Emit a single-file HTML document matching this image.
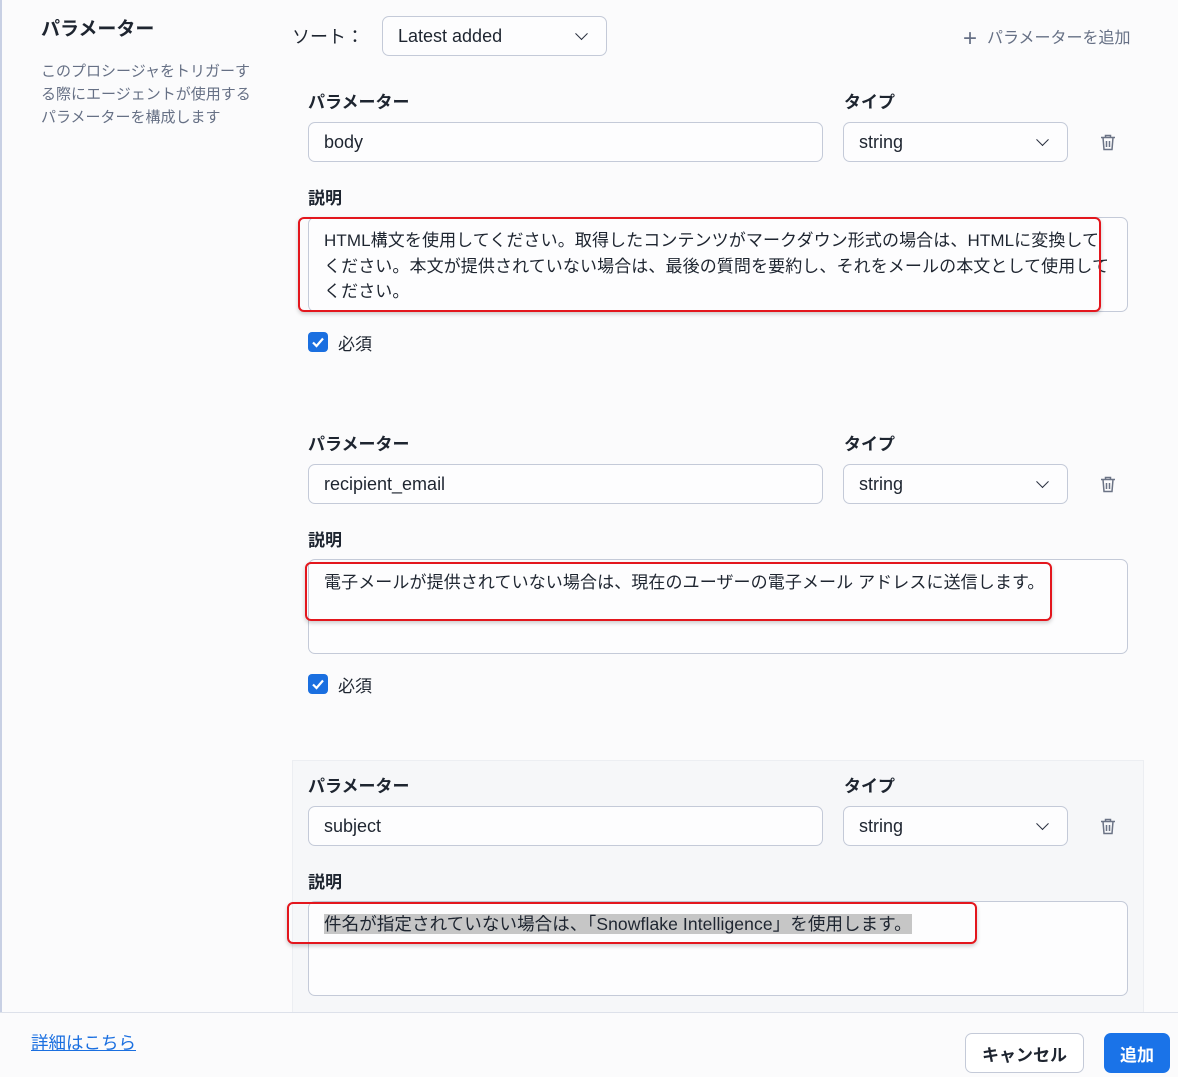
<!DOCTYPE html>
<html><head><meta charset="utf-8"><style>
*{box-sizing:border-box;margin:0;padding:0}
body{width:1178px;height:1077px;background:#fbfbfc;font-family:"Liberation Sans","Noto Sans CJK JP",sans-serif;color:#1e2530;position:relative;overflow:hidden}
.a{position:absolute}
.lbl{font-size:17px;font-weight:bold;color:#1e2530}
.inp{position:absolute;border:1px solid #c4cad8;border-radius:7px;background:#fdfdfe;font-size:18px;padding-left:15px;display:flex;align-items:center}
.ta{position:absolute;border:1px solid #c4cad8;border-radius:7px;background:#fdfdfe;font-size:17px;line-height:25.5px;padding:10px 15px;letter-spacing:0.1px}
.red{position:absolute;border:2px solid #e3161d;border-radius:6px;box-shadow:0 2px 4px rgba(0,0,0,.2)}
.chev{position:absolute;right:20px;top:50%;width:9px;height:9px;border-right:1.6px solid #2a3140;border-bottom:1.6px solid #2a3140;transform:translateY(-75%) rotate(45deg)}
.cb{position:absolute;width:20px;height:20px;background:#1a6fe0;border-radius:4px}
.req{position:absolute;font-size:17px}
</style></head><body>
<div class="a" style="left:0;top:0;width:2px;height:1077px;background:#c8d0e4"></div>
<div class="a" style="left:41px;top:14px;font-size:19px;font-weight:bold">パラメーター</div>
<div class="a" style="left:41px;top:60px;font-size:15px;line-height:23px;color:#667085;width:218px">このプロシージャをトリガーする際にエージェントが使用するパラメーターを構成します</div>
<div class="a" style="left:292px;top:23px;font-size:18px">ソート：</div>
<div class="inp" style="left:382px;top:16px;width:225px;height:40px">Latest added<span class="chev"></span></div>
<div class="a" style="left:963px;top:24px;font-size:16px;color:#667085"><span style="font-size:24px;font-weight:300;vertical-align:-3px;margin-right:10px">+</span>パラメーターを追加</div>

<div class="a" style="left:292px;top:760px;width:852px;height:260px;background:#f6f7f9;border:1px solid #eceef2"></div>

<!-- section 1 -->
<div class="a lbl" style="left:308px;top:88px">パラメーター</div>
<div class="a lbl" style="left:844px;top:88px">タイプ</div>
<div class="inp" style="left:308px;top:122px;width:515px;height:40px">body</div>
<div class="inp" style="left:843px;top:122px;width:225px;height:40px">string<span class="chev"></span></div>
<svg class="a" style="left:1100px;top:134px" width="16" height="17" viewBox="0 0 16 17" fill="none" stroke="#6b7385" stroke-width="1.5"><path d="M1 3.5h14M5.5 3.5V1.5h5v2M3 3.5l1 12h8l1-12M6.5 7v6M9.5 7v6"/></svg>
<div class="a lbl" style="left:308px;top:184px">説明</div>
<div class="ta" style="left:308px;top:217px;width:820px;height:95px">HTML構文を使用してください。取得したコンテンツがマークダウン形式の場合は、HTMLに変換してください。本文が提供されていない場合は、最後の質問を要約し、それをメールの本文として使用してください。</div>
<div class="red" style="left:298px;top:217px;width:803px;height:95px"></div>
<div class="cb" style="left:308px;top:332px"><svg width="20" height="20"><path d="M5 10.5l3.5 3.5 6.5-7.5" stroke="#fff" stroke-width="2.2" fill="none"/></svg></div>
<div class="req" style="left:338px;top:330px">必須</div>

<!-- section 2 -->
<div class="a lbl" style="left:308px;top:430px">パラメーター</div>
<div class="a lbl" style="left:844px;top:430px">タイプ</div>
<div class="inp" style="left:308px;top:464px;width:515px;height:40px">recipient_email</div>
<div class="inp" style="left:843px;top:464px;width:225px;height:40px">string<span class="chev"></span></div>
<svg class="a" style="left:1100px;top:476px" width="16" height="17" viewBox="0 0 16 17" fill="none" stroke="#6b7385" stroke-width="1.5"><path d="M1 3.5h14M5.5 3.5V1.5h5v2M3 3.5l1 12h8l1-12M6.5 7v6M9.5 7v6"/></svg>
<div class="a lbl" style="left:308px;top:526px">説明</div>
<div class="ta" style="left:308px;top:559px;width:820px;height:95px">電子メールが提供されていない場合は、現在のユーザーの電子メール アドレスに送信します。</div>
<div class="red" style="left:305px;top:562px;width:747px;height:59px"></div>
<div class="cb" style="left:308px;top:674px"><svg width="20" height="20"><path d="M5 10.5l3.5 3.5 6.5-7.5" stroke="#fff" stroke-width="2.2" fill="none"/></svg></div>
<div class="req" style="left:338px;top:672px">必須</div>

<!-- section 3 -->
<div class="a lbl" style="left:308px;top:772px">パラメーター</div>
<div class="a lbl" style="left:844px;top:772px">タイプ</div>
<div class="inp" style="left:308px;top:806px;width:515px;height:40px">subject</div>
<div class="inp" style="left:843px;top:806px;width:225px;height:40px">string<span class="chev"></span></div>
<svg class="a" style="left:1100px;top:818px" width="16" height="17" viewBox="0 0 16 17" fill="none" stroke="#6b7385" stroke-width="1.5"><path d="M1 3.5h14M5.5 3.5V1.5h5v2M3 3.5l1 12h8l1-12M6.5 7v6M9.5 7v6"/></svg>
<div class="a lbl" style="left:308px;top:868px">説明</div>
<div class="ta" style="left:308px;top:901px;width:820px;height:95px;font-size:17.5px"><span style="background:#c6c6c6">件名が指定されていない場合は、「Snowflake Intelligence」を使用します。</span></div>
<div class="red" style="left:287px;top:902px;width:690px;height:42px"></div>

<!-- footer -->
<div class="a" style="left:0;top:1012px;width:1178px;height:65px;background:#fbfbfc;border-top:1px solid #dde1ea"></div>
<div class="a" style="left:31px;top:1030px;font-size:17.5px;color:#1a6fe0;text-decoration:underline">詳細はこちら</div>
<div class="a" style="left:965px;top:1033px;width:119px;height:40px;border:1px solid #c4cad8;border-radius:7px;background:#fff;font-size:17px;font-weight:bold;display:flex;align-items:center;justify-content:center">キャンセル</div>
<div class="a" style="left:1104px;top:1033px;width:66px;height:40px;border-radius:7px;background:#1a73e8;color:#fff;font-size:17px;font-weight:bold;display:flex;align-items:center;justify-content:center">追加</div>
</body></html>
